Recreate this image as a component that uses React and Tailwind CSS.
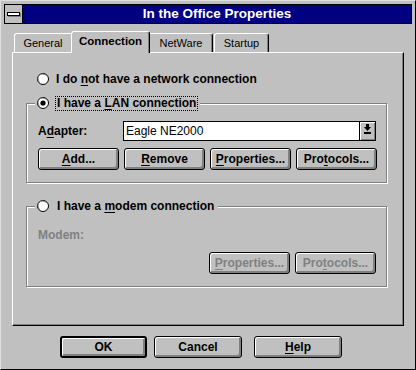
import React from "react";

function U({ children }) {
  return <span className="underline decoration-1 underline-offset-[2px]">{children}</span>;
}

function Radio({ checked }) {
  return (
    <svg width="12" height="12" viewBox="0 0 12 12" className="shrink-0">
      <circle cx="6" cy="6" r="5.5" fill="#fff" stroke="#000" />
      <path d="M2.3 8.5 A4.3 4.3 0 0 1 8.5 2.3" stroke="#808080" fill="none" />
      {checked && <circle cx="6" cy="6" r="2.6" fill="#000" />}
    </svg>
  );
}

function Btn({ children, className = "", disabled = false, def = false }) {
  return (
    <div
      className={
        "flex h-[22px] shrink-0 items-center justify-center rounded-[3px] border-black bg-[#c0c0c0] text-[12px] font-bold shadow-[inset_1px_1px_0_#fff,inset_-1px_-1px_0_#808080,inset_-2px_-2px_0_#808080] " +
        (def ? "border-2 " : "border ") +
        (disabled ? "text-[#808080] " : "text-black ") +
        className
      }
    >
      {children}
    </div>
  );
}

export default function App() {
  return (
    <div className="box-border h-[370px] w-[416px] border border-t-[#dfdfdf] border-l-[#dfdfdf] border-r-black border-b-black bg-[#c0c0c0] px-[3px] pt-[3px] font-['Liberation_Sans',Arial,sans-serif] text-black">
      {/* Title bar */}
      <div className="flex h-[20px] border border-black">
        <div className="flex w-[18px] items-center justify-center border-r border-black bg-[#c0c0c0]">
          <div className="h-[4px] w-[13px] border border-black bg-white shadow-[1px_1px_0_#808080]" />
        </div>
        <div className="flex flex-1 items-center justify-center bg-[#000080] text-[13.5px] font-bold leading-none text-white">
          In the Office Properties
        </div>
      </div>

      {/* Tabs */}
      <div className="ml-[10px] mt-[7px] flex h-[21px] items-end text-[11px]">
        <div className="flex h-[19px] w-[57px] items-center justify-center rounded-tl-[3px] border-l border-t border-white">
          General
        </div>
        <div className="relative z-10 -mb-px flex h-[22px] w-[79px] items-center justify-center rounded-t-[3px] border-l border-r border-t border-l-white border-t-white border-r-black bg-[#c0c0c0] pb-[2px] text-[11.5px] font-bold shadow-[inset_-1px_0_0_#808080]">
          Connection
        </div>
        <div className="flex h-[19px] w-[63px] items-center justify-center rounded-tr-[3px] border-r border-t border-r-black border-t-white shadow-[inset_-1px_0_0_#808080]">
          NetWare
        </div>
        <div className="ml-[1px] flex h-[19px] w-[55px] items-center justify-center rounded-t-[3px] border-l border-r border-t border-l-white border-t-white border-r-black shadow-[inset_-1px_0_0_#808080]">
          Startup
        </div>
      </div>

      {/* Panel */}
      <div className="ml-[8px] box-border h-[274px] w-[392px] border border-l-white border-t-white border-r-black border-b-black pt-[18px] text-[12px] font-bold shadow-[inset_-1px_-1px_0_#808080]">
        <div className="ml-[24px] flex h-[16px] items-center">
          <Radio />
          <span className="ml-[6px] border border-transparent leading-none">
            I do <U>n</U>ot have a network connection
          </span>
        </div>

        {/* LAN group */}
        <div className="ml-[13px] mt-[16px] box-border h-[80px] w-[361px] border border-[#808080] pl-[11px] shadow-[1px_1px_0_#fff,inset_1px_1px_0_#fff]">
          <div className="-ml-[3px] -mt-[9px] flex h-[16px] w-fit items-center bg-[#c0c0c0] px-[2px]">
            <Radio checked />
            <span className="ml-[6px] border border-dotted border-black px-[1px] leading-[13px]">
              I have a <U>L</U>AN connection
            </span>
          </div>
          <div className="mt-[10px] flex h-[20px] items-center">
            <div className="w-[85px]">
              A<U>d</U>apter:
            </div>
            <div className="flex h-[20px] w-[253px] border border-black bg-white">
              <div className="flex flex-1 items-center pl-[2px] text-[12px] font-normal">Eagle NE2000</div>
              <div className="flex w-[16px] items-start justify-center border-l border-black bg-[#c0c0c0] pt-[2px] shadow-[inset_1px_1px_0_#fff,inset_-1px_-1px_0_#808080]">
                <svg width="7" height="11" viewBox="0 0 7 11">
                  <path d="M2 0h3v3h2L3.5 7 0 3h2z" fill="#000" />
                  <rect x="0" y="8" width="7" height="2" fill="#000" />
                </svg>
              </div>
            </div>
          </div>
          <div className="mt-[7px] flex gap-[5px]">
            <Btn className="w-[81px]">
              <U>A</U>dd...
            </Btn>
            <Btn className="w-[81px]">
              <U>R</U>emove
            </Btn>
            <Btn className="w-[81px]">
              <U>P</U>roperties...
            </Btn>
            <Btn className="w-[81px]">
              Pro<U>t</U>ocols...
            </Btn>
          </div>
        </div>

        {/* Modem group */}
        <div className="ml-[13px] mt-[23px] box-border h-[81px] w-[361px] border border-[#808080] pl-[11px] shadow-[1px_1px_0_#fff,inset_1px_1px_0_#fff]">
          <div className="-ml-[3px] -mt-[9px] flex h-[16px] w-fit items-center bg-[#c0c0c0] px-[2px]">
            <Radio />
            <span className="ml-[6px] border border-transparent px-[1px] leading-[13px]">
              I have a <U>m</U>odem connection
            </span>
          </div>
          <div className="mt-[13px] flex h-[16px] items-center text-[#808080]">Modem:</div>
          <div className="mt-[9px] flex gap-[5px] pl-[171px]">
            <Btn className="w-[81px]" disabled>
              <U>P</U>roperties...
            </Btn>
            <Btn className="w-[81px]" disabled>
              Pro<U>t</U>ocols...
            </Btn>
          </div>
        </div>
      </div>

      {/* Bottom buttons */}
      <div className="ml-[56px] mt-[10px] flex">
        <Btn className="w-[87px]" def>
          OK
        </Btn>
        <Btn className="ml-[7px] w-[88px]">Cancel</Btn>
        <Btn className="ml-[12px] w-[88px]">
          <U>H</U>elp
        </Btn>
      </div>
    </div>
  );
}
